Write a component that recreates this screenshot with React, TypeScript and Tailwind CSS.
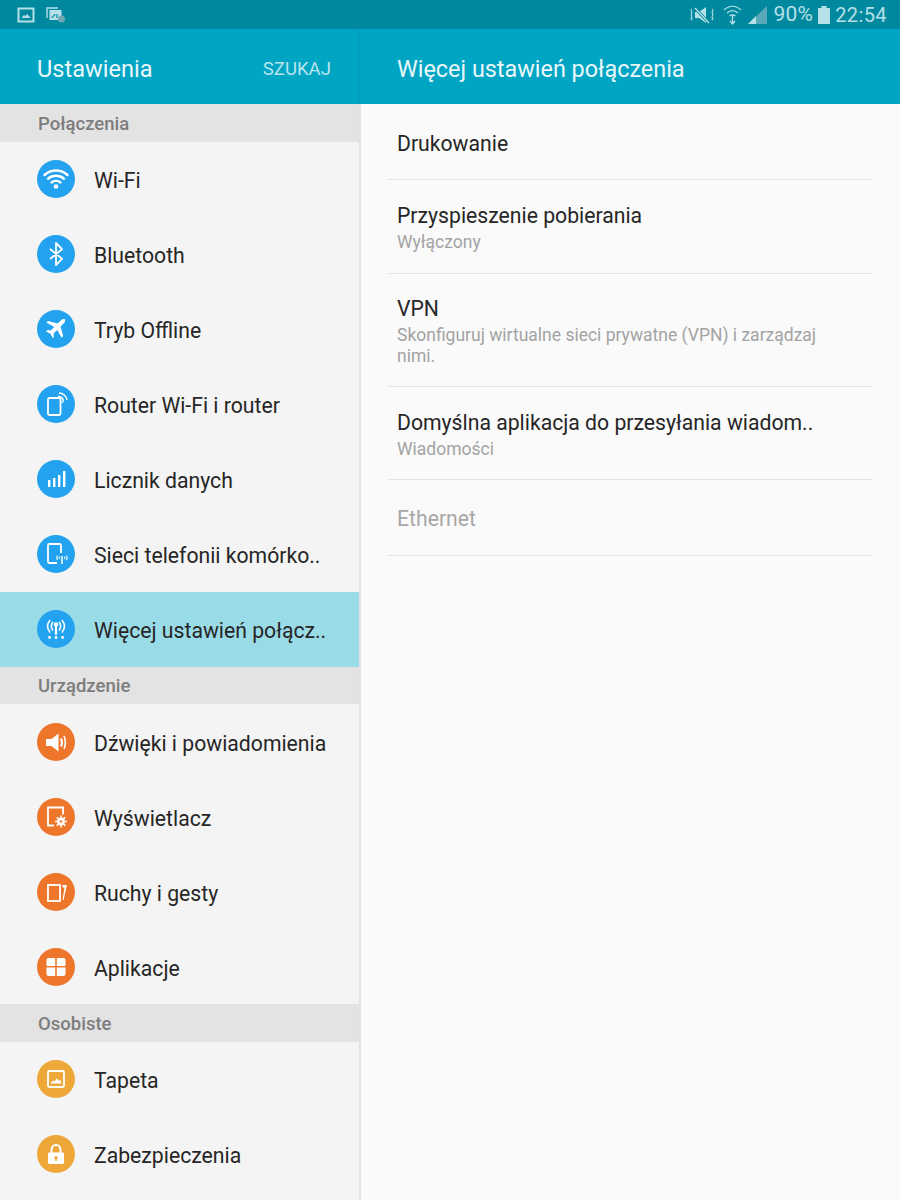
import React from "react";

const WifiIcon = () => (
  <svg viewBox="0 0 38 38" className="w-[38px] h-[38px]" fill="none" stroke="white" strokeLinecap="round">
    <path d="M7.500 15C14 9 24 9 30.500 15" strokeWidth="2.400" />
    <path d="M11 18.800C15.500 14.800 22.500 14.800 27 18.800" strokeWidth="2.400" />
    <path d="M14.500 22.500C17 20.300 21 20.300 23.500 22.500" strokeWidth="2.400" />
    <circle cx="19" cy="26.500" r="2.300" fill="white" stroke="none" />
  </svg>
);

const BluetoothIcon = () => (
  <svg viewBox="0 0 38 38" className="w-[38px] h-[38px]" fill="none" stroke="white" strokeWidth="1.800">
    <path d="M13 14L25 23.800L19 30V8L25 14.200L13 24" strokeLinejoin="round" />
  </svg>
);

const PlaneIcon = () => (
  <svg viewBox="0 0 38 38" className="w-[38px] h-[38px]" fill="white">
    <path d="M28.300 9.700c-1.100-1.100-2.900-.9-4 .2l-3.600 3.600-9.700-2.600-1.600 1.600 7.800 4.400-3.600 3.700-3.200-.5-1.300 1.300 4.300 2.300 2.300 4.300 1.300-1.300-.5-3.200 3.700-3.600 4.400 7.800 1.600-1.600-2.600-9.700 3.600-3.600c1.100-1.100 1.300-3 .1-4.100z" />
  </svg>
);

const RouterIcon = () => (
  <svg viewBox="0 0 38 38" className="w-[38px] h-[38px]" fill="none" stroke="white">
    <rect x="11" y="13" width="12.500" height="17" rx="1.500" strokeWidth="1.800" />
    <path d="M21 11.500C24 11.500 26 13.500 26.500 16" strokeWidth="1.400" />
    <path d="M22 8C26.500 8 29.500 11.500 30 15" strokeWidth="1.400" />
    <circle cx="25.500" cy="17" r="1" fill="white" stroke="none" />
  </svg>
);

const BarsIcon = () => (
  <svg viewBox="0 0 38 38" className="w-[38px] h-[38px]" fill="white">
    <rect x="11" y="20" width="2.400" height="7" />
    <rect x="16" y="18" width="2.400" height="9" />
    <rect x="21" y="15" width="2.400" height="12" />
    <rect x="26" y="11" width="2.400" height="16" />
  </svg>
);

const SimIcon = () => (
  <svg viewBox="0 0 38 38" className="w-[38px] h-[38px]" fill="none" stroke="white">
    <path d="M20 28H12.500a1.500 1.500 0 0 1-1.500-1.500V10.500A1.500 1.500 0 0 1 12.500 9h10a1.500 1.500 0 0 1 1.500 1.500V18" strokeWidth="1.800" />
    <path d="M20.500 20.500c-1 1.500-1 3 0 4.500M29.500 20.500c1 1.500 1 3 0 4.500M22.500 21.500c-.6.8-.6 1.700 0 2.500M27.500 21.500c.6.8.6 1.700 0 2.500" strokeWidth="1.100" />
    <path d="M25 21v8" strokeWidth="1.500" />
  </svg>
);

const AntennaIcon = () => (
  <svg viewBox="0 0 38 38" className="w-[38px] h-[38px]" fill="none" stroke="white" strokeLinecap="round">
    <path d="M12.800 10.500c-2.800 3.500-2.800 8 0 11.500M25.200 10.500c2.800 3.500 2.800 8 0 11.500" strokeWidth="1.600" />
    <path d="M15.600 12.500c-1.600 2.400-1.600 5.200 0 7.500M22.400 12.500c1.600 2.400 1.600 5.200 0 7.500" strokeWidth="1.600" />
    <circle cx="19" cy="14.500" r="2.200" fill="white" stroke="none" />
    <path d="M19 15v9" strokeWidth="2.200" />
    <path d="M12.500 27.500h.1M19 27.500h.1M25.500 27.500h.1" strokeWidth="2.800" />
  </svg>
);

const SpeakerIcon = () => (
  <svg viewBox="0 0 38 38" className="w-[38px] h-[38px]" fill="none" stroke="white">
    <path d="M9 16h5.500l7-5.500v18l-7-5.500H9z" fill="white" stroke="none" />
    <path d="M24 15.500c1.200 2.600 1.200 5.400 0 8" strokeWidth="2.200" />
    <path d="M27 13c1.700 4 1.700 9 0 13" strokeWidth="1.600" />
  </svg>
);

const DisplayIcon = () => (
  <svg viewBox="0 0 38 38" className="w-[38px] h-[38px]" fill="none" stroke="white">
    <path d="M17 27.500h-6V9.500h15v7" strokeWidth="1.800" />
    <circle cx="24" cy="23.500" r="3.900" fill="white" stroke="none" />
    <circle cx="24" cy="23.500" r="1.300" fill="#ee762b" stroke="none" />
    <path d="M24 17.500v12M18 23.500h12M19.800 19.300l8.400 8.400M28.200 19.300l-8.400 8.400" strokeWidth="1.700" strokeDasharray="2 8" />
  </svg>
);

const MotionIcon = () => (
  <svg viewBox="0 0 38 38" className="w-[38px] h-[38px]" fill="none" stroke="white">
    <rect x="11" y="12" width="12" height="16" strokeWidth="1.800" />
    <path d="M25.500 12h4.500l-3.500 15h-1l2-12.500h-2z" fill="white" stroke="none" />
  </svg>
);

const AppsIcon = () => (
  <svg viewBox="0 0 38 38" className="w-[38px] h-[38px]" fill="white">
    <path d="M9.500 12a2 2 0 0 1 2-2h6.700v8H9.500zM19.800 10h6.700a2 2 0 0 1 2 2v6h-8.700zM9.500 19.600h8.700V28h-6.700a2 2 0 0 1-2-2zM19.800 19.600h8.700V26a2 2 0 0 1-2 2h-6.700z" />
  </svg>
);

const WallpaperIcon = () => (
  <svg viewBox="0 0 38 38" className="w-[38px] h-[38px]" fill="none" stroke="white">
    <rect x="11" y="11" width="16" height="16" rx="1.500" strokeWidth="1.800" />
    <path d="M13.500 23.500l2.500-3 1.500 1 2-3 2.500 2.200 1.500-.7 1 3.500z" fill="white" stroke="none" />
  </svg>
);

const LockIcon = () => (
  <svg viewBox="0 0 38 38" className="w-[38px] h-[38px]">
    <path d="M14.500 18v-3.500a4.500 4.500 0 0 1 9 0V18" fill="none" stroke="white" strokeWidth="2" />
    <rect x="11" y="17.500" width="16" height="11.500" rx="1.200" fill="white" />
    <circle cx="19" cy="22.500" r="1.600" fill="#eea83a" />
    <rect x="18.200" y="22.500" width="1.600" height="3.500" fill="#eea83a" />
  </svg>
);

const Row = ({ label, color, icon, active }: { label: string; color: string; icon: React.ReactNode; active?: boolean }) => (
  <div className={`h-[75px] flex items-center pl-[37px] ${active ? "bg-[#9adbe8]" : ""}`}>
    <div className={`w-[38px] h-[38px] rounded-full shrink-0 ${color}`}>{icon}</div>
    <span className="ml-[19px] pt-[4px] text-[21.2px] text-[#262626] whitespace-nowrap">{label}</span>
  </div>
);

const Section = ({ label }: { label: string }) => (
  <div className="h-[37.5px] bg-[#e3e3e3] flex items-center pl-[38px] pt-[4px] text-[18.5px] font-medium text-[#7d7d7d]">{label}</div>
);

const Detail = ({ title, sub, className }: { title: string; sub?: React.ReactNode; className: string }) => (
  <div className={`ml-[27px] mr-[28px] px-[9px] border-b border-[#e2e2e2] flex flex-col justify-center ${className}`}>
    <div className="text-[21.2px] leading-[26px] pt-[1px] text-[#262626] whitespace-nowrap">{title}</div>
    {sub && <div className="text-[17.5px] leading-[21px] mt-[3px] text-[#a3a3a3]">{sub}</div>}
  </div>
);

export default function App() {
  const blue = "bg-[#23a3ef]";
  const orange = "bg-[#ee762b]";
  const yellow = "bg-[#eea83a]";

  return (
    <div className="w-[900px] h-[1200px] overflow-hidden flex flex-col font-['Roboto',sans-serif] bg-[#fafafa]">
      {/* status bar */}
      <div className="h-[29px] shrink-0 bg-[#00889f] flex items-center justify-between pl-[17px] pr-[13px] text-[#b5e0e8]">
        <div className="flex items-center gap-[11px]">
          <svg width="18" height="16" viewBox="0 0 18 16" fill="none" stroke="currentColor">
            <rect x="1.500" y="1.500" width="15" height="13" strokeWidth="2" />
            <path d="M4.500 11l2.500-3 1.500 1 1.500-2 2 2 1.500 2z" fill="currentColor" stroke="none" />
          </svg>
          <svg width="20" height="18" viewBox="0 0 20 18" fill="none" stroke="currentColor">
            <path d="M1 12V2h11" strokeWidth="1.400" />
            <rect x="3.500" y="4" width="12" height="10" fill="currentColor" stroke="none" />
            <path d="M6 12c0-2 3-2 3-4M11 8v4" stroke="#00889f" strokeWidth="1.200" />
            <circle cx="15.500" cy="13" r="3.500" fill="#6fa8b4" stroke="none" />
          </svg>
        </div>
        <div className="flex items-center">
          <svg width="26" height="20" viewBox="0 0 26 20" fill="none" stroke="currentColor" className="mr-[8px]">
            <path d="M2.500 4c-2 1.500 2 3 0 4.500s2 3 0 4.500s2 1 0 2" strokeWidth="1.100" />
            <path d="M23.500 4c2 1.500-2 3 0 4.500s-2 3 0 4.500s-2 1 0 2" strokeWidth="1.100" />
            <path d="M6 7h4l7-5v16l-7-5H6z" fill="currentColor" stroke="none" />
            <path d="M5 2l14 15" stroke="#00889f" strokeWidth="3" />
            <path d="M6 3l14 15" strokeWidth="1.400" />
          </svg>
          <svg width="19" height="22" viewBox="0 0 19 22" fill="none" stroke="currentColor" className="mr-[6px]">
            <path d="M1 6c5-5 12-5 17 0M4 9c3.500-3 7.500-3 11 0M6.500 12c2-1.500 4-1.500 6 0" strokeWidth="1.200" />
            <path d="M9.500 11v8M7 17l2.500 3 2.500-3" strokeWidth="1.300" />
          </svg>
          <svg width="19" height="18" viewBox="0 0 19 18" className="mr-[7px]">
            <path d="M0 18L19 0V18z" fill="#5aa9b8" />
            <path d="M0 18L8 10V18z" fill="currentColor" />
          </svg>
          <span className="text-[21px] tracking-[0.2px]">90%</span>
          <svg width="12" height="18" viewBox="0 0 12 18" className="ml-[5px] mr-[5px]">
            <path d="M3.500 0h5v2H12v16H0V2h3.500z" fill="currentColor" />
          </svg>
          <span className="text-[20px] tracking-[0.4px]">22:54</span>
        </div>
      </div>

      {/* app bars */}
      <div className="h-[75px] shrink-0 flex bg-[#00a5c4] text-white">
        <div className="w-[359px] border-r border-[#0095b1] flex items-center justify-between pl-[37px] pr-[27px] pt-[6px]">
          <span className="text-[23.6px] text-[#eaf7fa]">Ustawienia</span>
          <span className="text-[18.6px] text-[#b8e4ed]">SZUKAJ</span>
        </div>
        <div className="flex-1 flex items-center pl-[38px] pt-[6px]">
          <span className="text-[23.4px] text-[#eaf7fa]">Więcej ustawień połączenia</span>
        </div>
      </div>

      <div className="flex-1 flex min-h-0">
        {/* left list */}
        <div className="w-[361px] shrink-0 bg-[#f4f4f4] border-r-2 border-[#e2e2e2] overflow-hidden">
          <Section label="Połączenia" />
          <Row label="Wi-Fi" color={blue} icon={<WifiIcon />} />
          <Row label="Bluetooth" color={blue} icon={<BluetoothIcon />} />
          <Row label="Tryb Offline" color={blue} icon={<PlaneIcon />} />
          <Row label="Router Wi-Fi i router" color={blue} icon={<RouterIcon />} />
          <Row label="Licznik danych" color={blue} icon={<BarsIcon />} />
          <Row label="Sieci telefonii komórko.." color={blue} icon={<SimIcon />} />
          <Row label="Więcej ustawień połącz.." color={blue} icon={<AntennaIcon />} active />
          <Section label="Urządzenie" />
          <Row label="Dźwięki i powiadomienia" color={orange} icon={<SpeakerIcon />} />
          <Row label="Wyświetlacz" color={orange} icon={<DisplayIcon />} />
          <Row label="Ruchy i gesty" color={orange} icon={<MotionIcon />} />
          <Row label="Aplikacje" color={orange} icon={<AppsIcon />} />
          <Section label="Osobiste" />
          <Row label="Tapeta" color={yellow} icon={<WallpaperIcon />} />
          <Row label="Zabezpieczenia" color={yellow} icon={<LockIcon />} />
        </div>

        {/* right detail */}
        <div className="flex-1 min-w-0">
          <Detail title="Drukowanie" className="h-[76px] pt-[4px]" />
          <Detail title="Przyspieszenie pobierania" sub="Wyłączony" className="h-[94px] pt-[2px]" />
          <Detail
            title="VPN"
            sub={
              <>
                Skonfiguruj wirtualne sieci prywatne (VPN) i zarządzaj
                <br />
                nimi.
              </>
            }
            className="h-[113px] pt-[1px]"
          />
          <Detail title="Domyślna aplikacja do przesyłania wiadom.." sub="Wiadomości" className="h-[93px] pt-[3px]" />
          <div className="ml-[27px] mr-[28px] px-[9px] pt-[2px] h-[76px] border-b border-[#e2e2e2] flex items-center text-[21.2px] text-[#a8a8a8]">Ethernet</div>
        </div>
      </div>
    </div>
  );
}
